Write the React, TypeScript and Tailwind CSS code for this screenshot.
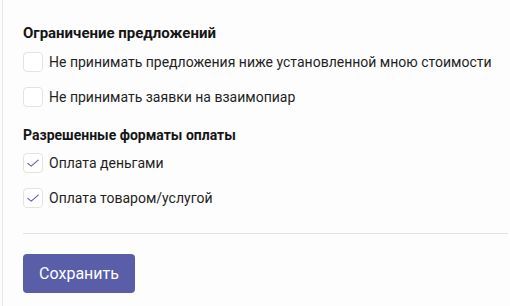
import { useState } from 'react'

type Option = { id: string; label: string; checked: boolean }

const Check = ({ checked, label, onToggle }: { checked: boolean; label: string; onToggle: () => void }) => (
  <label className="flex h-5 cursor-pointer items-center gap-[6px]" onClick={onToggle}>
    <span className="flex h-5 w-5 items-center justify-center rounded-[4px] border border-[#e3e3e3] bg-white">
      {checked && (
        <svg width="12" height="12" viewBox="0 0 12 12" fill="none">
          <path d="M0.8 6.4 4.2 9.2 11.2 3.2" stroke="#5b5fa9" strokeWidth="1.1" strokeLinecap="round" strokeLinejoin="round" />
        </svg>
      )}
    </span>
    <span className="text-[14px] leading-5 text-[#1f1f1f]">{label}</span>
  </label>
)

const App = () => {
  const [limits, setLimits] = useState<Option[]>([
    { id: 'below', label: 'Не принимать предложения ниже установленной мною стоимости', checked: false },
    { id: 'mutual', label: 'Не принимать заявки на взаимопиар', checked: false },
  ])
  const [payments, setPayments] = useState<Option[]>([
    { id: 'money', label: 'Оплата деньгами', checked: true },
    { id: 'goods', label: 'Оплата товаром/услугой', checked: true },
  ])

  const toggle = (list: Option[], set: (v: Option[]) => void, id: string) =>
    set(list.map((o) => (o.id === id ? { ...o, checked: !o.checked } : o)))

  return (
    <div className="h-[306px] w-[510px] bg-[#fdfdfd] pl-[2px] font-['Roboto',sans-serif]">
      <div className="h-full border-l border-[#e6e6e6] pl-[20px] pr-[2px]">
        <h2 className="pt-[23px] text-[15px] font-bold leading-5 text-[#151515]">Ограничение предложений</h2>
        <div className="mt-[9px] flex flex-col gap-[15px]">
          {limits.map((o) => (
            <Check key={o.id} checked={o.checked} label={o.label} onToggle={() => toggle(limits, setLimits, o.id)} />
          ))}
        </div>

        <h3 className="mt-[18px] text-[14px] font-bold leading-5 text-[#151515]">Разрешенные форматы оплаты</h3>
        <div className="mt-[8px] flex flex-col gap-[15px]">
          {payments.map((o) => (
            <Check key={o.id} checked={o.checked} label={o.label} onToggle={() => toggle(payments, setPayments, o.id)} />
          ))}
        </div>

        <div className="mt-[25px] border-t border-[#e3e3e3]" />

        <button className="mt-[20px] h-[39px] w-[112px] rounded-[4px] bg-[#5a5ea8] text-[16px] text-white">
          Сохранить
        </button>
      </div>
    </div>
  )
}

export default App
